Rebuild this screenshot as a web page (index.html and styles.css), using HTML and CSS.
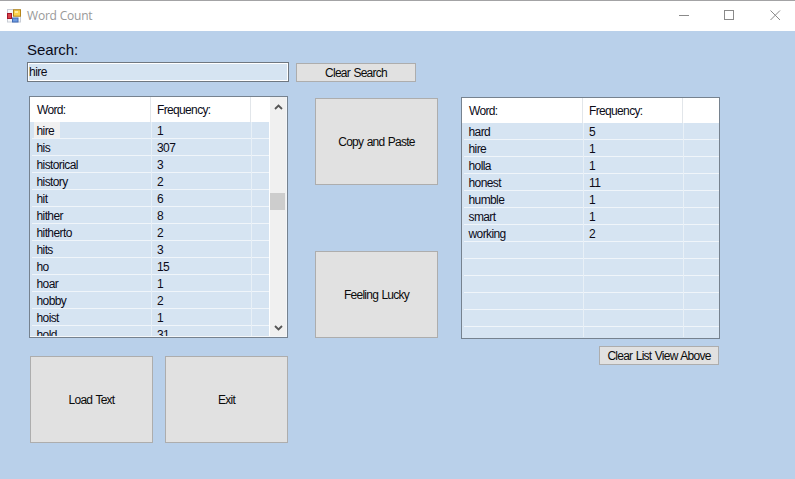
FILE: index.html
```html
<!DOCTYPE html>
<html lang="en">
<head>
<meta charset="utf-8">
<title>Word Count</title>
<link rel="stylesheet" href="styles.css">
</head>
<body>
<div class="window">
  <header class="titlebar">
    <svg class="app-icon" width="14" height="14" viewBox="0 0 14 14">
      <rect x=".5" y=".5" width="13" height="12.5" fill="#f7f8fa" stroke="#c9ced6"/>
      <rect x=".5" y="4.5" width="4" height="5" fill="#d8434a" stroke="#a3162a"/>
      <rect x="6.5" y=".8" width="7" height="6.4" fill="#fcd34c" stroke="#b58418"/>
      <rect x="8" y="2" width="3" height="2" fill="#ffeaa0"/>
      <rect x="5.5" y="9" width="5.5" height="4" fill="#6e9be0" stroke="#3f69b4"/>
    </svg>
    <span class="title">Word Count</span>
    <svg class="controls" width="103" height="12" viewBox="0 0 103 12" fill="none" stroke="#8a8a8a">
      <path d="M0 5.500H10"/>
      <rect x="45.500" y=".5" width="9" height="9"/>
      <path d="M91.500 .5l9.500 9.500M101 .5l-9.500 9.500"/>
    </svg>
  </header>
  <main class="client">
    <label class="search-label" for="search">Search:</label>
    <div class="search-row">
      <input class="search" id="search" type="text" value="hire">
      <button class="btn small">Clear Search</button>
    </div>
    <div class="columns">
      <section class="left">
        <div class="list">
          <div class="table">
            <div class="head"><span>Word:</span><span>Frequency:</span><span></span></div>
            <div class="rows">
              <div class="row"><span class="selected">hire</span><span>1</span><span></span></div>
              <div class="row"><span>his</span><span>307</span><span></span></div>
              <div class="row"><span>historical</span><span>3</span><span></span></div>
              <div class="row"><span>history</span><span>2</span><span></span></div>
              <div class="row"><span>hit</span><span>6</span><span></span></div>
              <div class="row"><span>hither</span><span>8</span><span></span></div>
              <div class="row"><span>hitherto</span><span>2</span><span></span></div>
              <div class="row"><span>hits</span><span>3</span><span></span></div>
              <div class="row"><span>ho</span><span>15</span><span></span></div>
              <div class="row"><span>hoar</span><span>1</span><span></span></div>
              <div class="row"><span>hobby</span><span>2</span><span></span></div>
              <div class="row"><span>hoist</span><span>1</span><span></span></div>
              <div class="row"><span>hold</span><span>31</span><span></span></div>
            </div>
          </div>
          <div class="scrollbar">
            <svg width="9" height="6" viewBox="0 0 9 6"><path d="M1 5l3.500-3.500L8 5" fill="none" stroke="#555" stroke-width="1.800"/></svg>
            <div class="track"><div class="thumb"></div></div>
            <svg width="9" height="6" viewBox="0 0 9 6"><path d="M1 1l3.500 3.500L8 1" fill="none" stroke="#555" stroke-width="1.800"/></svg>
          </div>
        </div>
        <div class="actions">
          <button class="btn">Load Text</button>
          <button class="btn">Exit</button>
        </div>
      </section>
      <section class="middle">
        <button class="btn">Copy and Paste</button>
        <button class="btn">Feeling Lucky</button>
      </section>
      <section class="right">
        <div class="list">
          <div class="table">
            <div class="head"><span>Word:</span><span>Frequency:</span><span></span></div>
            <div class="rows">
              <div class="row"><span>hard</span><span>5</span><span></span></div>
              <div class="row"><span>hire</span><span>1</span><span></span></div>
              <div class="row"><span>holla</span><span>1</span><span></span></div>
              <div class="row"><span>honest</span><span>11</span><span></span></div>
              <div class="row"><span>humble</span><span>1</span><span></span></div>
              <div class="row"><span>smart</span><span>1</span><span></span></div>
              <div class="row"><span>working</span><span>2</span><span></span></div>
              <div class="row"><span></span><span></span><span></span></div>
              <div class="row"><span></span><span></span><span></span></div>
              <div class="row"><span></span><span></span><span></span></div>
              <div class="row"><span></span><span></span><span></span></div>
              <div class="row"><span></span><span></span><span></span></div>
              <div class="row"><span></span><span></span><span></span></div>
            </div>
          </div>
        </div>
        <button class="btn small">Clear List View Above</button>
      </section>
    </div>
  </main>
</div>
</body>
</html>
```
FILE: styles.css
```css
* { box-sizing: border-box; }
body {
  margin: 0;
  font: 12px/16px "Liberation Sans", Arial, sans-serif;
  color: #0b0b18;
}
.window {
  width: 795px;
  height: 479px;
  display: flex;
  flex-direction: column;
  overflow: hidden;
}
.titlebar {
  height: 31px;
  flex: none;
  display: flex;
  align-items: center;
  padding: 0 13px 0 7px;
  border-top: 1px solid #a3a3a5;
  background: #fff;
}
.title {
  margin-left: 6px;
  font: 12px/16px "Open Sans", "Noto Sans", sans-serif;
  letter-spacing: -0.2px;
  color: #999;
}
.controls { margin-left: auto; }
.client {
  flex: 1;
  padding: 9px 0 0 27px;
  background: #b9d0ea;
}
.search-label {
  display: block;
  height: 22px;
  font-size: 15px;
  line-height: 20px;
  letter-spacing: -0.1px;
}
.search-row {
  display: flex;
  align-items: flex-end;
  gap: 7px;
}
.search {
  width: 262px;
  height: 20px;
  padding: 0 1px;
  border: 1px solid #6f7780;
  box-shadow: inset 0 0 0 1px #fff;
  background: #d6e4f2;
  font: inherit;
  letter-spacing: -0.5px;
  color: inherit;
  outline: 0;
}
.btn {
  width: 123px;
  height: 87px;
  padding: 0;
  border: 1px solid #adadad;
  background: #e1e1e1;
  font: inherit;
  letter-spacing: -0.75px;
  word-spacing: 0.8px;
  color: #0b0b0b;
}
.btn.small {
  width: 120px;
  height: 19px;
  line-height: 16px;
}
.columns {
  display: flex;
  margin: 14px 0 0 2px;
}
.left { width: 259px; }
.list {
  display: flex;
  width: 259px;
  height: 242px;
  padding-bottom: 1px;
  border: 1px solid #76828f;
  background: #d6e4f2;
}
.left .list { padding-right: 1px; background: #f3f6f9; }
.table {
  flex: 1;
  display: flex;
  flex-direction: column;
  min-width: 0;
  overflow: hidden;
  background: #d6e4f2;
}
.head, .row {
  display: grid;
  grid-template-columns: 121px 100px 1fr;
}
.head {
  height: 25px;
  flex: none;
  background: #fff;
  line-height: 27px;
  letter-spacing: -0.65px;
}
.head span { height: 25px; padding-left: 7px; border-right: 1px solid #e2e6ea; }
.head span:nth-child(2) { padding-left: 6px; }
.head span:last-child { border: 0; }
.rows { flex: 1; min-height: 0; margin-left: 2px; overflow: hidden; }
.row {
  height: 17px;
  grid-template-columns: 120px 100px 1fr;
  border-bottom: 1px solid #f0f5fa;
  line-height: 19px;
  letter-spacing: -0.6px;
}
.row span { height: 17px; padding-left: 5px; border-right: 1px solid #e8f0f7; }
.row span:first-child { padding-left: 4.500px; }
.row span:last-child { border: 0; }
.row .selected {
  background: linear-gradient(#f0f0f0, #f0f0f0) 2px 0 / 26px 16px no-repeat;
}
.scrollbar {
  width: 17px;
  display: flex;
  flex-direction: column;
  align-items: center;
  padding: 7px 0 5px;
  border-left: 1px solid #fff;
  background: #f0f0f0;
}
.track { flex: 1; align-self: stretch; padding-top: 83px; }
.thumb { width: 15px; height: 17px; background: #cdcdcd; }
.actions {
  display: flex;
  gap: 12px;
  margin: 18px 0 0 1px;
}
.middle {
  display: flex;
  flex-direction: column;
  gap: 66px;
  margin: 2px 23px 0 27px;
}
.right {
  display: flex;
  flex-direction: column;
  align-items: flex-end;
  gap: 7px;
  width: 259px;
  margin-top: 1px;
}
.right .btn { margin-right: 1px; }
```
